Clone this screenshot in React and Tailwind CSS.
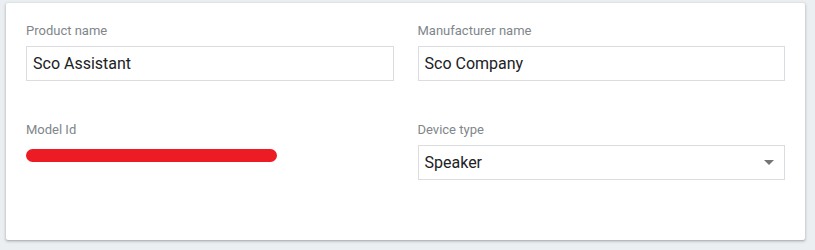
import React from 'react';

const font = { fontFamily: 'Roboto, "Liberation Sans", sans-serif' };

function Field({ label, children }) {
  return (
    <div className="flex flex-col">
      <label className="text-[13px] leading-[16px] text-[#80868b] mb-[7px]">{label}</label>
      {children}
    </div>
  );
}

function TextBox({ value }) {
  return (
    <div className="h-[35px] border border-[#dadce0] flex items-center pl-[6px] text-[16px] text-[#202124]">
      {value}
    </div>
  );
}

export default function App() {
  return (
    <div className="min-h-[250px] bg-[#eceff1] pt-[3px] pl-[6px]" style={font}>
      <div className="w-[799px] bg-white rounded-[2px] shadow-[0_1px_2px_rgba(60,64,67,0.3),0_1px_3px_1px_rgba(60,64,67,0.12)] pt-[20px] pb-[60px] px-[20px]">
        <div className="grid grid-cols-2 gap-x-[24px] gap-y-[41px]">
          <Field label="Product name">
            <TextBox value="Sco Assistant" />
          </Field>
          <Field label="Manufacturer name">
            <TextBox value="Sco Company" />
          </Field>
          <Field label="Model Id">
            <div className="h-[35px] pt-[4px]">
              <div className="w-[251px] h-[13px] rounded-full bg-[#ed1c24]" />
            </div>
          </Field>
          <Field label="Device type">
            <div className="h-[35px] border border-[#dadce0] flex items-center justify-between pl-[6px] pr-[10px] text-[16px] text-[#202124]">
              <span>Speaker</span>
              <svg width="10" height="5" viewBox="0 0 10 5">
                <path d="M0 0L5 5L10 0Z" fill="#757575" />
              </svg>
            </div>
          </Field>
        </div>
      </div>
    </div>
  );
}
